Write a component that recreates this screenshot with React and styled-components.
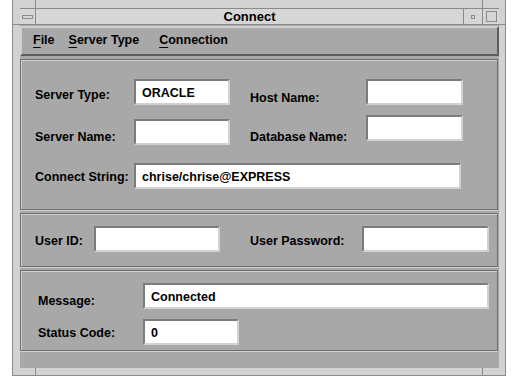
import styled, { createGlobalStyle } from "styled-components";

const GlobalStyle = createGlobalStyle`
  html, body {
    margin: 0;
    padding: 0;
    background: #ffffff;
  }
  body {
    font-family: "Liberation Sans", Arial, sans-serif;
    font-size: 12.5px;
    font-weight: bold;
    color: #000;
  }
`;

const Frame = styled.div`
  position: relative;
  box-sizing: border-box;
  width: 494px;
  height: 376px;
  margin-left: 12px;
  padding: 8px 6px 7px 7px;
  background: #d2d2d2;
  border-left: 1px solid #8a8a8a;
  border-right: 1px solid #8a8a8a;
  border-bottom: 1px solid #8a8a8a;
  display: flex;
  flex-direction: column;
`;

const Notch = styled.div`
  position: absolute;
  background: #8a8a8a;
  ${props => props.v ? `width: 1px; height: ${props.len}px;` : `height: 1px; width: ${props.len}px;`}
  ${props => props.css}
`;

const TitleBar = styled.div`
  box-sizing: border-box;
  height: 17px;
  display: flex;
  background: #d6d6d6;
  border-top: 1px solid #8a8a8a;
  border-bottom: 1px solid #8a8a8a;
`;

const TitleButton = styled.div`
  width: ${props => props.w}px;
  display: flex;
  align-items: center;
  justify-content: center;
  ${props => props.side === "left" ? "border-left: 1px solid #8a8a8a;" : "border-right: 1px solid #8a8a8a;"}
`;

const Glyph = styled.div`
  box-sizing: border-box;
  width: ${props => props.w}px;
  height: ${props => props.h}px;
  border: 1px solid #8a8a8a;
  background: #d6d6d6;
`;

const Title = styled.div`
  flex: 1;
  text-align: center;
  line-height: 15px;
  font-size: 13px;
`;

const Client = styled.div`
  flex: 1;
  display: flex;
  flex-direction: column;
  background: #a8a8a8;
  padding-top: 1px;
`;

const MenuBar = styled.div`
  box-sizing: border-box;
  height: 30px;
  display: flex;
  align-items: center;
  padding: 0 0 2px 11px;
  border-top: 2px solid #cfcfcf;
  border-left: 2px solid #cfcfcf;
  border-bottom: 2px solid #5e5e5e;
  border-right: 2px solid #5e5e5e;
`;

const MenuItem = styled.span`
  font-size: 12.5px;
  margin-right: ${props => props.gap || 0}px;
`;

const Mnemonic = styled.span`
  text-decoration: underline;
  text-underline-offset: 3px;
  text-decoration-thickness: 1px;
`;

const Panel = styled.div`
  box-sizing: border-box;
  margin: 3px 1px 0 0;
  border: 1px solid #6e6e6e;
  box-shadow: inset 1px 1px 0 #d0d0d0, 0 1px 0 #d0d0d0;
  display: grid;
  grid-template-columns: ${props => props.cols};
  grid-template-rows: ${props => props.rows};
  row-gap: ${props => props.gap || 0}px;
  padding: ${props => props.pad};
`;

const Label = styled.div`
  height: 26px;
  margin-top: ${props => props.shift || 0}px;
  display: flex;
  align-items: center;
  white-space: nowrap;
`;

const Field = styled.div`
  box-sizing: border-box;
  height: 26px;
  margin-top: ${props => props.shift || 0}px;
  margin-right: ${props => props.mr || 0}px;
  grid-column: ${props => props.span || "auto"};
  background: #ffffff;
  border-style: solid;
  border-width: 2px;
  border-color: #7c7c7c #d2d2d2 #d2d2d2 #7c7c7c;
  padding: 1px 6px 0;
  line-height: 22px;
  white-space: nowrap;
  overflow: hidden;
`;

const Spacer = styled.div``;

export default function App() {
  return (
    <>
      <GlobalStyle />
      <Frame>
        <Notch v len={8} css="left: 22px; top: 0;" />
        <Notch v len={8} css="left: 469px; top: 0;" />
        <Notch len={7} css="left: 0; top: 24px;" />
        <Notch len={6} css="right: 0; top: 24px;" />
        <Notch v len={7} css="left: 22px; bottom: 0;" />
        <Notch v len={7} css="left: 469px; bottom: 0;" />
        <TitleBar>
          <TitleButton w={15}>
            <Glyph w={11} h={4} />
          </TitleButton>
          <Title>Connect</Title>
          <TitleButton w={18} side="left">
            <Glyph w={4} h={4} />
          </TitleButton>
          <TitleButton w={16} side="left">
            <Glyph w={11} h={11} />
          </TitleButton>
        </TitleBar>
        <Client>
          <MenuBar>
            <MenuItem gap={14}><Mnemonic>F</Mnemonic>ile</MenuItem>
            <MenuItem gap={20}><Mnemonic>S</Mnemonic>erver Type</MenuItem>
            <MenuItem><Mnemonic>C</Mnemonic>onnection</MenuItem>
          </MenuBar>

          <Panel cols="99px 96px 20px 116px 97px" rows="40px 44px 26px" pad="19px 0 20px 14px">
            <Label shift={3}>Server Type:</Label>
            <Field>ORACLE</Field>
            <Spacer />
            <Label shift={6}>Host Name:</Label>
            <Field />

            <Label shift={5}>Server Name:</Label>
            <Field />
            <Spacer />
            <Label shift={5}>Database Name:</Label>
            <Field shift={-4} />

            <Label shift={1}>Connect String:</Label>
            <Field span="2 / span 4" mr={2}>chrise/chrise@EXPRESS</Field>
          </Panel>

          <Panel cols="59px 126px 30px 112px 127px" rows="26px" pad="12px 0 14px 14px">
            <Label shift={2}>User ID:</Label>
            <Field />
            <Spacer />
            <Label shift={2}>User Password:</Label>
            <Field />
          </Panel>

          <Panel cols="105px 96px 250px" rows="26px 26px" gap={10} pad="12px 0 5px 17px">
            <Label shift={5}>Message:</Label>
            <Field span="2 / span 2">Connected</Field>
            <Label shift={1}>Status Code:</Label>
            <Field>0</Field>
          </Panel>
        </Client>
      </Frame>
    </>
  );
}
